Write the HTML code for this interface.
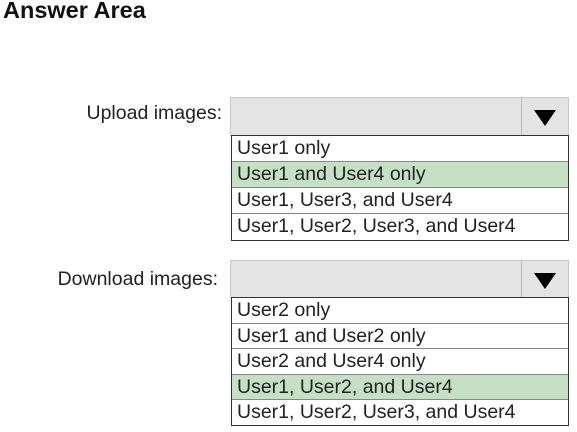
<!DOCTYPE html>
<html><head><style>
body{margin:0;width:577px;height:432px;background:#fff;position:relative;font-family:"Liberation Sans",Arial,sans-serif;color:#222;overflow:hidden}
.t{position:absolute;left:3px;top:-3px;font-size:23.5px;font-weight:bold;color:#111}
.lbl{position:absolute;font-size:19.5px;text-align:right;white-space:nowrap}
.sel{position:absolute;left:230px;width:339px;background:#e4e4e4;border:1px solid #c8c8c8;box-sizing:border-box}
.arr{position:absolute;right:0;top:0;bottom:0;width:46px;border-left:1px solid #bbb}
.arr:after{content:"";position:absolute;left:12px;top:12px;border-left:11px solid transparent;border-right:11px solid transparent;border-top:16px solid #000}
.list{position:absolute;left:231px;width:338px;border:1.5px solid #333;box-sizing:border-box}
.list div{font-size:19.5px;line-height:25px;padding-left:5px;border-bottom:1px solid #888;box-sizing:border-box;white-space:nowrap}
.list div:last-child{border-bottom:none}
.g{background:#c5e0c5}
</style></head><body>
<div class="t">Answer Area</div>
<div class="lbl" style="right:355px;top:102px">Upload images:</div>
<div class="sel" style="top:97px;height:39px"><div class="arr"></div></div>
<div class="list" style="top:135px;height:106px">
<div style="height:26px">User1 only</div>
<div class="g" style="height:26px">User1 and User4 only</div>
<div style="height:26px">User1, User3, and User4</div>
<div style="height:26px">User1, User2, User3, and User4</div>
</div>
<div class="lbl" style="right:359px;top:268px">Download images:</div>
<div class="sel" style="top:260px;height:38px"><div class="arr"></div></div>
<div class="list" style="top:297px;height:129px">
<div style="height:25.5px">User2 only</div>
<div style="height:25.5px">User1 and User2 only</div>
<div style="height:25.5px">User2 and User4 only</div>
<div class="g" style="height:25.5px">User1, User2, and User4</div>
<div style="height:25.5px">User1, User2, User3, and User4</div>
</div>
</body></html>
